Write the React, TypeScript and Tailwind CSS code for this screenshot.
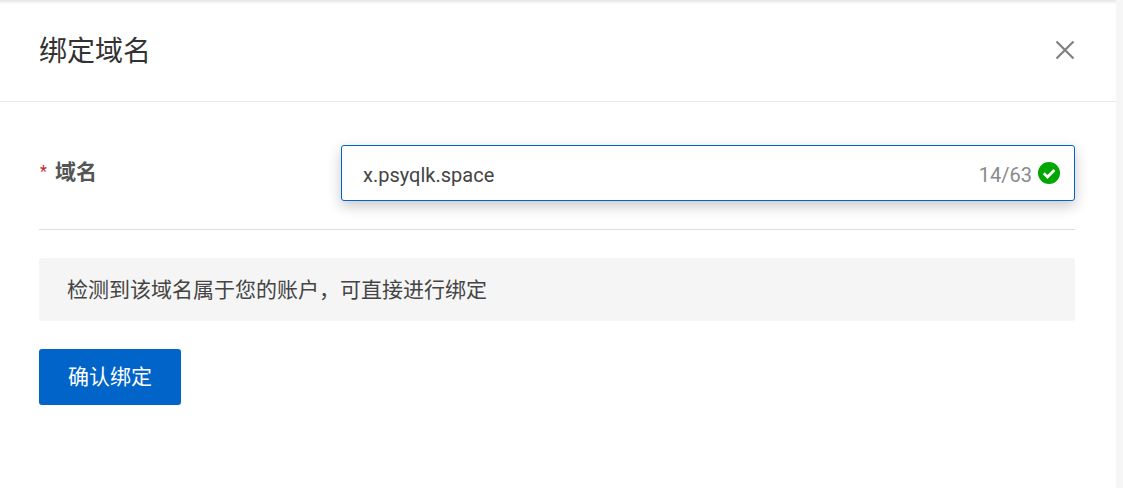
import React from 'react';

function CheckBadge() {
  return (
    <svg width="22" height="22" viewBox="0 0 22 22" className="shrink-0">
      <circle cx="11" cy="11" r="11" fill="#00a700" />
      <path d="M5.800 11.200l3.700 3.700L16.400 8" fill="none" stroke="#fff" strokeWidth="2.8" />
    </svg>
  );
}

export default function App() {
  return (
    <div className="flex h-[488px] w-[1123px] overflow-hidden bg-[#f6f6f6] font-['Roboto','Noto_Sans_CJK_SC',sans-serif]">
      <div className="relative h-full w-[1116px] bg-white">
        <div className="absolute inset-x-0 top-0 h-1 bg-gradient-to-b from-[#e4e4e4] to-white" />
        <header className="flex h-[102px] items-center justify-between border-b border-[#e8e8e8] pb-[2px] pl-[39px] pr-[41px]">
          <h1 className="pt-[5px] text-[28px] leading-none text-[#333]">绑定域名</h1>
          <svg width="20" height="20" viewBox="0 0 20 20">
            <path d="M1.500 1.500l17 17M18.500 1.500l-17 17" stroke="#808080" strokeWidth="2.2" />
          </svg>
        </header>

        <div className="pl-[39px] pr-[41px]">
          <div className="flex h-[128px] items-start border-b border-[#dedede] pt-[43px]">
            <label className="flex w-[302px] items-center pt-[13px] text-[21px] leading-[28px] text-[#555]">
              <span className="ml-px mr-[7px] w-2 text-[16px] text-[#c8242a]">*</span>
              <span className="font-bold">域名</span>
            </label>
            <div className="flex h-[56px] flex-1 items-center rounded-[3px] border border-[#0064c8] bg-white pl-[21px] pr-[14px] shadow-[0_5px_14px_rgba(0,0,0,0.22)]">
              <span className="flex-1 pt-[3px] text-[20px] text-[#444]">x.psyqlk.space</span>
              <span className="mr-[6px] pt-[3px] text-[20px] text-[#8a8a8a]">14/63</span>
              <CheckBadge />
            </div>
          </div>

          <div className="mt-[28px] flex h-[63px] items-center rounded-[3px] bg-[#f5f5f5] px-[28px] pt-[3px] text-[21px] text-[#444]">
            检测到该域名属于您的账户，可直接进行绑定
          </div>

          <button className="mt-[28px] h-[56px] w-[142px] rounded-[3px] bg-[#0064c8] pt-[2px] text-[21px] text-white">
            确认绑定
          </button>
        </div>
      </div>
    </div>
  );
}
